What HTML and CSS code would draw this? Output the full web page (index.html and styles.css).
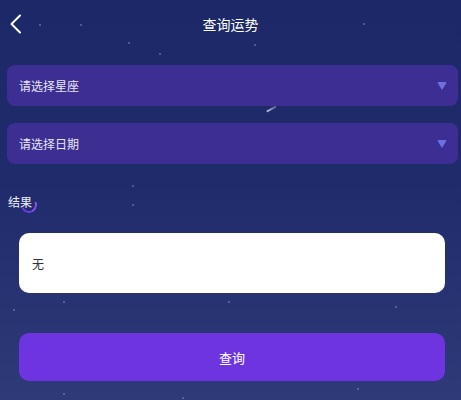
FILE: index.html
```html
<!DOCTYPE html>
<html lang="zh">
<head>
<meta charset="utf-8">
<link rel="stylesheet" href="styles.css">
</head>
<body>
<div class="page">
  <div class="stars"></div>
  <header class="header">
    <span class="back">
      <svg width="14" height="20" viewBox="0 0 14 20"><path d="M11 1.5 L2.5 10 L11 18.5" fill="none" stroke="#fff" stroke-width="2" stroke-linecap="round" stroke-linejoin="round"/></svg>
    </span>
    <h1 class="title">查询运势</h1>
  </header>
  <div class="selects">
    <div class="select"><span>请选择星座</span><i class="caret"></i></div>
    <div class="select"><span>请选择日期</span><i class="caret"></i></div>
    <span class="meteor"></span>
  </div>
  <div class="label-row"><span class="label">结果</span><span class="spinner"></span></div>
  <div class="result">无</div>
  <button class="btn">查询</button>
</div>
</body>
</html>
```
FILE: styles.css
```css
html, body { margin: 0; padding: 0; }
body {
  width: 461px; height: 400px; overflow: hidden;
  font-family: "Noto Sans CJK SC", "Noto Sans", sans-serif;
  background: linear-gradient(180deg, #1c2868 0%, #1f2b6b 45%, #2f3a78 100%);
}
.page { position: relative; height: 400px; }
.stars {
  position: absolute; inset: 0; pointer-events: none;
  background:
    radial-gradient(circle, rgba(150,160,220,.4) 1px, transparent 1.5px) 38px 23px / 4px 4px no-repeat,
    radial-gradient(circle, rgba(150,160,220,.4) 1px, transparent 1.5px) 79px 23px / 4px 4px no-repeat,
    radial-gradient(circle, rgba(150,160,220,.4) 1px, transparent 1.5px) 127px 41px / 4px 4px no-repeat,
    radial-gradient(circle, rgba(150,160,220,.4) 1px, transparent 1.5px) 158px 52px / 4px 4px no-repeat,
    radial-gradient(circle, rgba(150,160,220,.4) 1px, transparent 1.5px) 253px 43px / 4px 4px no-repeat,
    radial-gradient(circle, rgba(150,160,220,.4) 1px, transparent 1.5px) 362px 22px / 4px 4px no-repeat,
    radial-gradient(circle, rgba(150,160,220,.4) 1px, transparent 1.5px) 131px 184px / 4px 4px no-repeat,
    radial-gradient(circle, rgba(150,160,220,.4) 1px, transparent 1.5px) 131px 203px / 4px 4px no-repeat,
    radial-gradient(circle, rgba(150,160,220,.4) 1px, transparent 1.5px) 12px 308px / 4px 4px no-repeat,
    radial-gradient(circle, rgba(150,160,220,.4) 1px, transparent 1.5px) 62px 300px / 4px 4px no-repeat,
    radial-gradient(circle, rgba(150,160,220,.4) 1px, transparent 1.5px) 227px 300px / 4px 4px no-repeat,
    radial-gradient(circle, rgba(150,160,220,.4) 1px, transparent 1.5px) 394px 305px / 4px 4px no-repeat,
    radial-gradient(circle, rgba(150,160,220,.4) 1px, transparent 1.5px) 62px 392px / 4px 4px no-repeat,
    radial-gradient(circle, rgba(150,160,220,.4) 1px, transparent 1.5px) 181px 396px / 4px 4px no-repeat,
    radial-gradient(circle, rgba(150,160,220,.4) 1px, transparent 1.5px) 356px 387px / 4px 4px no-repeat,
    radial-gradient(circle, rgba(150,160,220,.4) 1px, transparent 1.5px) 287px 335px / 4px 4px no-repeat;
}
.header {
  position: relative; height: 48px;
  display: flex; align-items: center; justify-content: center;
}
.back { position: absolute; left: 9px; top: 14px; display: flex; }
.title {
  margin: 0; font-size: 14px; font-weight: 400; color: #fff;
  line-height: 20px;
}
.selects {
  position: relative;
  display: flex; flex-direction: column; gap: 17px;
  padding: 17px 3px 0 7px;
}
.select {
  height: 41px; border-radius: 8px; background: #3c2e92;
  display: flex; align-items: center; justify-content: space-between;
  padding: 0 12px;
  color: #e8e6f5; font-size: 12px;
}
.meteor {
  position: absolute; left: 266px; top: 60px;
  width: 11px; height: 2px; border-radius: 1px;
  background: linear-gradient(90deg, rgba(200,205,240,.9), rgba(200,205,240,.3));
  transform: rotate(-28deg);
}
.caret {
  width: 0; height: 0;
  border-left: 5px solid transparent; border-right: 5px solid transparent;
  border-top: 8px solid #6d70e2; border-radius: 2px;
  margin-right: -1px; margin-top: 1px;
}
.label-row {
  position: relative;
  display: flex; align-items: center;
  padding: 28px 0 0 8px; height: 20px;
}
.label { color: #eef0fa; font-size: 12px; line-height: 20px; }
.spinner {
  width: 12px; height: 12px; border-radius: 50%;
  border: 2px solid transparent;
  border-right-color: #8a4ef0; border-bottom-color: #6a3ee0;
  transform: rotate(20deg);
  margin-left: -11px; margin-top: 5px;
}
.result {
  position: relative;
  margin: 21px 16px 0 19px; height: 60px; box-sizing: border-box;
  background: #fff; border-radius: 10px;
  display: flex; align-items: center; padding-left: 13px;
  font-size: 12px; color: #333;
}
.btn {
  position: relative; display: block;
  margin: 40px 16px 0 19px; width: 426px; height: 48px;
  border: 0; border-radius: 10px; background: #6e34df;
  color: #fff; font-size: 13px; font-family: inherit;
}
```
